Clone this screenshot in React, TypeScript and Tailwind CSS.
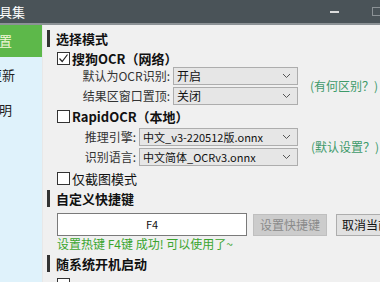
import React from 'react';

const font = { fontFamily: '"Noto Sans CJK SC", "Microsoft YaHei", sans-serif' };

const Chevron = () => (
  <svg width="9" height="6" viewBox="0 0 9 6" className="shrink-0">
    <path d="M1 1 L4.5 4.5 L8 1" fill="none" stroke="#555" strokeWidth="1" />
  </svg>
);

const Check = ({ checked }: { checked?: boolean }) => (
  <span className="w-[13px] h-[13px] border border-[#333] bg-white flex items-center justify-center shrink-0">
    {checked && (
      <svg width="11" height="11" viewBox="0 0 11 11">
        <path d="M1.5 5.5 L4.2 8.5 L9.5 1.5" fill="none" stroke="#222" strokeWidth="1.2" />
      </svg>
    )}
  </span>
);

const Select = ({ value, mono, width }: { value: string; mono?: boolean; width: string }) => (
  <div className={`${width} h-[18px] border border-[#adadad] bg-[#e6e6e6] flex items-center justify-between pl-[3px] pr-[6px]`}>
    <span className={mono ? 'text-[11px] text-[#111] whitespace-nowrap' : 'text-[12px] text-[#111]'}>{value}</span>
    <Chevron />
  </div>
);

const Header = ({ title }: { title: string }) => (
  <div className="flex items-center h-[17px] gap-[6px]">
    <div className="w-[3px] h-[17px] bg-[#333]" />
    <span className="text-[13px] font-bold text-[#111]">{title}</span>
  </div>
);

const Row = ({ label, labelW, children }: { label: string; labelW: string; children: React.ReactNode }) => (
  <div className="flex items-center h-[20px]">
    <span className={`${labelW} text-right text-[12px] text-[#333] pr-[3px]`}>{label}</span>
    {children}
  </div>
);

export default function App() {
  return (
    <div className="w-[380px] h-[282px] overflow-hidden bg-[#f0f0f0] flex flex-col" style={font}>
      <div className="h-[25px] shrink-0 bg-[#4a5358] border-b-2 border-[#8c9296] flex items-center">
        <span className="ml-[-14px] text-[13px] text-white whitespace-nowrap">工具集</span>
        <div className="flex-1" />
        <div className="w-[9px] h-[2px] bg-[#dcdcdc] mr-[33px]" />
        <div className="w-[9px] h-[9px] border border-[#8c9296] mr-[-1px]" />
      </div>
      <div className="flex flex-1 min-h-0">
        <div className="w-[43px] shrink-0 bg-[#dff2fb] border-r border-[#e8e8e8] flex flex-col text-[13px] overflow-hidden">
          <div className="h-[32px] bg-[#5db84a] flex items-center">
            <span className="ml-[-14px] text-[#f2f7d8] whitespace-nowrap">设置</span>
          </div>
          <div className="h-[36px] flex items-center">
            <span className="ml-[-11px] text-[#222] whitespace-nowrap">更新</span>
          </div>
          <div className="h-[34px] flex items-center">
            <span className="ml-[-14px] text-[#222] whitespace-nowrap">说明</span>
          </div>
        </div>
        <div className="flex-1 pl-[4px] pt-[5px] flex flex-col">
          <Header title="选择模式" />
          <div className="pl-[10px] mt-[4px] flex items-center gap-[2px] h-[15px]">
            <Check checked />
            <span className="text-[13px] font-bold text-[#111]">搜狗OCR（网络）</span>
          </div>
          <div className="flex items-center">
            <div className="flex flex-col">
              <Row label="默认为OCR识别:" labelW="w-[126px]">
                <Select value="开启" width="w-[125px]" />
              </Row>
              <Row label="结果区窗口置顶:" labelW="w-[126px]">
                <Select value="关闭" width="w-[125px]" />
              </Row>
            </div>
            <span className="ml-[12px] text-[12px] text-[#3e9a6a] whitespace-nowrap">(有何区别？)</span>
          </div>
          <div className="pl-[10px] mt-[3px] flex items-center gap-[2px] h-[15px]">
            <Check />
            <span className="text-[13px] font-bold text-[#111]">RapidOCR（本地）</span>
          </div>
          <div className="flex items-center mt-[3px]">
            <div className="flex flex-col">
              <Row label="推理引擎:" labelW="w-[92px]">
                <Select value="中文_v3-220512版.onnx" width="w-[159px]" mono />
              </Row>
              <Row label="识别语言:" labelW="w-[92px]">
                <Select value="中文简体_OCRv3.onnx" width="w-[159px]" mono />
              </Row>
            </div>
            <span className="ml-[13px] text-[12px] text-[#3e9a6a] whitespace-nowrap">(默认设置？)</span>
          </div>
          <div className="pl-[10px] mt-[4px] flex items-center gap-[2px] h-[15px]">
            <Check />
            <span className="text-[13px] text-[#111]">仅截图模式</span>
          </div>
          <div className="mt-[4px]">
            <Header title="自定义快捷键" />
          </div>
          <div className="pl-[10px] mt-[6px] flex items-center">
            <div className="w-[190px] h-[23px] shrink-0 bg-white border border-[#7a7a7a] flex items-center justify-center text-[11px] text-[#111]">
              F4
            </div>
            <div className="ml-[6px] w-[74px] h-[22px] shrink-0 bg-[#cccccc] border border-[#bfbfbf] flex items-center justify-center text-[12px] text-[#8a8a8a]">
              设置快捷键
            </div>
            <div className="ml-[9px] w-[80px] h-[22px] shrink-0 bg-[#e1e1e1] border border-[#adadad] flex items-center pl-[5px] text-[12px] text-[#111] whitespace-nowrap">
              取消当前快捷键
            </div>
          </div>
          <div className="pl-[10px] text-[12px] text-[#3aa52e] whitespace-nowrap h-[16px] flex items-center">
            设置热键 F4键 成功! 可以使用了~
          </div>
          <div className="mt-[3px]">
            <Header title="随系统开机启动" />
          </div>
          <div className="pl-[10px] mt-[6px] flex items-center gap-[2px] h-[15px]">
            <Check />
          </div>
        </div>
      </div>
    </div>
  );
}
